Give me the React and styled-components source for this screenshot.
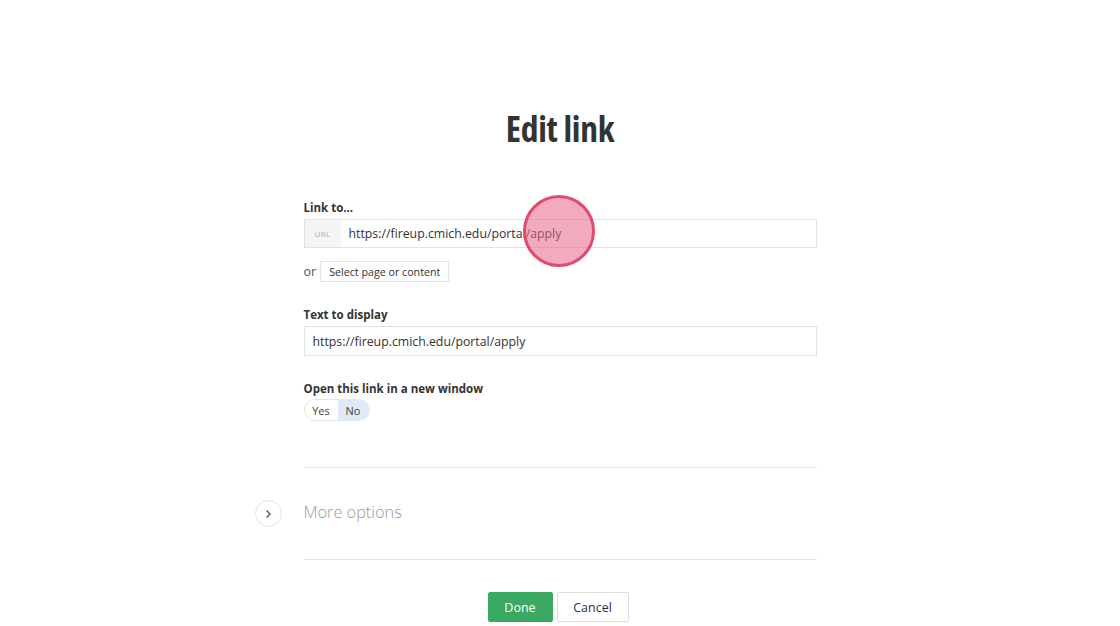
import React from "react";
import styled, { createGlobalStyle } from "styled-components";

const Global = createGlobalStyle`
  html, body { margin: 0; padding: 0; background: #fff; }
  body { font-family: "Open Sans", "Noto Sans", sans-serif; color: #333; }
  * { box-sizing: border-box; }
`;

const Page = styled.div`
  width: 1120px;
  height: 626px;
  overflow: hidden;
  display: flex;
  flex-direction: column;
  align-items: center;
  position: relative;
`;

const Title = styled.h1`
  margin: 103px 0 0;
  height: 50px;
  font-family: "Open Sans", sans-serif;
  font-weight: 700;
  font-size: 35.5px;
  line-height: 50px;
  font-stretch: 75%;
  letter-spacing: -0.3px;
  color: #333;
`;

const Form = styled.div`
  width: 513px;
  margin-top: 46px;
  display: flex;
  flex-direction: column;
`;

const Label = styled.div`
  font-size: 11.5px;
  font-weight: 700;
  line-height: 17px;
  color: #333;
  margin-bottom: ${(p) => p.$mb ?? 3}px;
`;

const InputBox = styled.div`
  display: flex;
  height: ${(p) => p.$h}px;
  border: 1px solid #e1e1e1;
  background: #fff;
  position: relative;
`;

const Addon = styled.div`
  width: 36px;
  background: #f5f5f5;
  color: #aaa;
  font-size: 8px;
  display: flex;
  align-items: center;
  justify-content: center;
  letter-spacing: 0.3px;
`;

const Value = styled.div`
  flex: 1;
  display: flex;
  align-items: center;
  padding-left: ${(p) => p.$pad}px;
  font-size: 12.3px;
  color: #333;
`;

const OrRow = styled.div`
  display: flex;
  align-items: center;
  gap: 4px;
  margin-top: 13px;
  font-size: 12.5px;
  color: #555;
`;

const SmallButton = styled.div`
  height: 21px;
  padding: 0 8px;
  border: 1px solid #e1e1e1;
  font-size: 10.7px;
  display: flex;
  align-items: center;
  color: #333;
`;

const Section = styled.div`
  margin-top: ${(p) => p.$mt}px;
  display: flex;
  flex-direction: column;
`;

const Toggle = styled.div`
  display: flex;
  width: 66px;
  height: 22px;
  border: 1px solid #e6e6e6;
  border-radius: 11px;
  overflow: hidden;
`;

const ToggleOpt = styled.div`
  flex: ${(p) => (p.$w ? `0 0 ${p.$w}px` : 1)};
  display: flex;
  align-items: center;
  justify-content: center;
  font-size: 11px;
  color: #444;
  background: ${(p) => (p.$active ? "#dfeaf4" : "#fff")};
`;

const Divider = styled.div`
  height: 1px;
  background: #e4e4e4;
`;

const MoreRow = styled.div`
  height: 91px;
  display: flex;
  align-items: center;
  position: relative;
`;

const Chevron = styled.div`
  position: absolute;
  left: -49px;
  top: 32px;
  width: 27px;
  height: 27px;
  border: 1px solid #e3e3e3;
  border-radius: 50%;
  display: flex;
  align-items: center;
  justify-content: center;
`;

const MoreText = styled.div`
  font-size: 16.3px;
  font-weight: 300;
  color: #999;
  margin-top: -4px;
`;

const Buttons = styled.div`
  display: flex;
  gap: 4px;
  margin-top: 32px;
  margin-right: 4px;
`;

const Btn = styled.div`
  height: 30px;
  width: ${(p) => p.$w}px;
  display: flex;
  align-items: center;
  justify-content: center;
  font-size: 12.5px;
  background: ${(p) => (p.$primary ? "#3aa962" : "#fff")};
  color: ${(p) => (p.$primary ? "#fff" : "#333")};
  border: 1px solid ${(p) => (p.$primary ? "#3aa962" : "#dcdcdc")};
  border-radius: 2px;
`;

const Tap = styled.div`
  position: absolute;
  left: 523px;
  top: 195px;
  width: 72px;
  height: 72px;
  border-radius: 50%;
  border: 3px solid #de4c6e;
  background: rgba(232, 102, 134, 0.55);
`;

export default function App() {
  return (
    <Page>
      <Global />
      <Title>Edit link</Title>
      <Form>
        <Label>Link to...</Label>
        <InputBox $h={29}>
          <Addon>URL</Addon>
          <Value $pad={8}>https://fireup.cmich.edu/portal/apply</Value>
        </InputBox>
        <OrRow>
          <span>or</span>
          <SmallButton>Select page or content</SmallButton>
        </OrRow>
        <Section $mt={24}>
          <Label>Text to display</Label>
          <InputBox $h={30}>
            <Value $pad={8}>https://fireup.cmich.edu/portal/apply</Value>
          </InputBox>
        </Section>
        <Section $mt={24}>
          <Label $mb={2}>Open this link in a new window</Label>
          <Toggle>
            <ToggleOpt $w={33}>Yes</ToggleOpt>
            <ToggleOpt $active>No</ToggleOpt>
          </Toggle>
        </Section>
        <Section $mt={46}>
          <Divider />
          <MoreRow>
            <Chevron>
              <svg width="10" height="10" viewBox="0 0 10 10">
                <path d="M3.5 1.5 L7 5 L3.5 8.5" fill="none" stroke="#555" strokeWidth="1.4" />
              </svg>
            </Chevron>
            <MoreText>More options</MoreText>
          </MoreRow>
          <Divider />
        </Section>
      </Form>
      <Buttons>
        <Btn $primary $w={65}>Done</Btn>
        <Btn $w={72}>Cancel</Btn>
      </Buttons>
      <Tap />
    </Page>
  );
}
